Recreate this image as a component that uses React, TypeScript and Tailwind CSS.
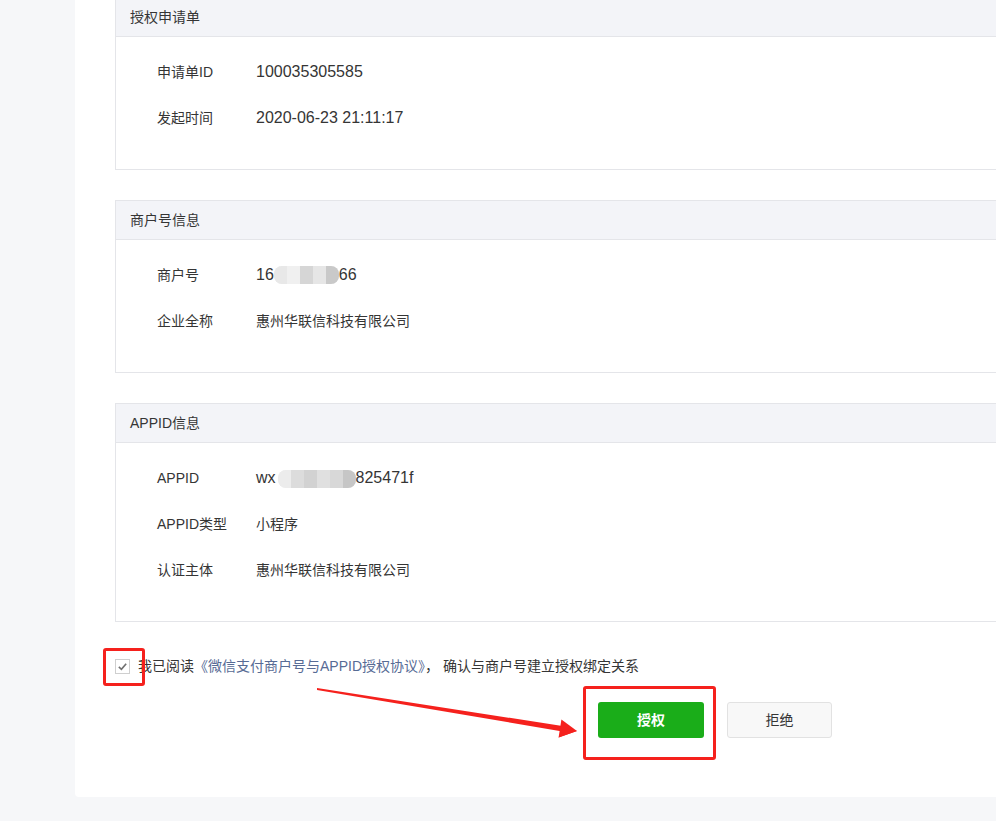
import React from "react";

type Row = { label: string; value: React.ReactNode };

function Blur({ widths }: { widths: string[] }) {
  // mosaic blocks standing in for the masked digits
  return (
    <span className="inline-flex h-[18px] items-center overflow-hidden rounded-[8px] bg-[#f1f1f1] align-middle blur-[0.6px]">
      {widths.map((c, i) => (
        <span key={i} className="h-[18px] w-[13px]" style={{ background: c }} />
      ))}
    </span>
  );
}

function Card({ title, rows, className = "" }: { title: string; rows: Row[]; className?: string }) {
  return (
    <div className={"w-[940px] border border-[#e4e5e9] bg-white " + className}>
      <div className="flex h-[39px] items-center border-b border-[#e4e5e9] bg-[#f3f4f8] pl-[14px] text-[14px] text-[#353535]">
        {title}
      </div>
      <div className="pb-[28px] pt-[12px]">
        {rows.map((r) => (
          <div key={r.label} className="flex h-[46px] items-center pl-[41px] text-[14px] text-[#353535]">
            <div className="w-[99px]">{r.label}</div>
            <div className="flex items-center">{r.value}</div>
          </div>
        ))}
      </div>
    </div>
  );
}

export default function App() {
  const company = "惠州华联信科技有限公司";
  return (
    <div className="relative h-[821px] w-[996px] overflow-hidden bg-[#f6f7f9] font-['Liberation_Sans','Noto_Sans_CJK_SC',sans-serif]">
      <div className="ml-[75px] h-[797px] rounded-bl-[4px] bg-white pl-[40px]">
        <div className="flex flex-col gap-[30px]">
          <Card
            className="-mt-[3px]"
            title="授权申请单"
            rows={[
              { label: "申请单ID", value: <span className="text-[16px]">100035305585</span> },
              { label: "发起时间", value: <span className="text-[16px]">2020-06-23 21:11:17</span> },
            ]}
          />
          <Card
            title="商户号信息"
            rows={[
              {
                label: "商户号",
                value: (
                  <span className="flex items-center text-[16px]">
                    16
                    <Blur widths={["#e8e8e8", "#f0f0f0", "#d6d6d6", "#e6e6e6", "#c9c9c9"]} />
                    66
                  </span>
                ),
              },
              { label: "企业全称", value: company },
            ]}
          />
          <Card
            title="APPID信息"
            rows={[
              {
                label: "APPID",
                value: (
                  <span className="flex items-center text-[16px]">
                    wx
                    <span className="ml-[2px]">
                      <Blur widths={["#ececec", "#dcdcdc", "#d2d2d2", "#e0e0e0", "#d8d8d8", "#c6c6c6"]} />
                    </span>
                    825471f
                  </span>
                ),
              },
              { label: "APPID类型", value: "小程序" },
              { label: "认证主体", value: company },
            ]}
          />
        </div>

        <div className="mt-[34px] flex items-center text-[14px] text-[#353535]">
          <span className="flex h-[15px] w-[15px] items-center justify-center border border-[#cfcfcf] bg-white">
            <svg width="11" height="11" viewBox="0 0 12 12">
              <path d="M2 6.5 L4.8 9 L10 3" fill="none" stroke="#707070" strokeWidth="1.8" />
            </svg>
          </span>
          <span className="ml-[8px]">
            我已阅读<span className="text-[#576b95]">《微信支付商户号与APPID授权协议》</span>， 确认与商户号建立授权绑定关系
          </span>
        </div>

        <div className="mt-[25px] flex gap-[23px] pl-[483px]">
          <button className="h-[36px] w-[106px] rounded-[3px] bg-[#1aad19] text-[14px] font-bold text-white">
            授权
          </button>
          <button className="h-[36px] w-[105px] rounded-[3px] border border-[#e2e2e2] bg-[#f8f8f8] text-[14px] text-[#353535]">
            拒绝
          </button>
        </div>
      </div>

      {/* red annotations */}
      <div className="absolute left-[103px] top-[648px] h-[38px] w-[42px] rounded-[3px] border-[3px] border-[#f5211d]" />
      <div className="absolute left-[583px] top-[686px] h-[74px] w-[133px] rounded-[3px] border-[3px] border-[#f5211d]" />
      <svg className="absolute left-0 top-0" width="996" height="821">
        <polygon
          points="317,688 562.4,726 577,731 558.6,737.4 561,731.2 317,690"
          fill="#f5211d"
        />
        <polygon points="561.4,719.6 577,731 558.6,737.4" fill="#f5211d" />
      </svg>
    </div>
  );
}
